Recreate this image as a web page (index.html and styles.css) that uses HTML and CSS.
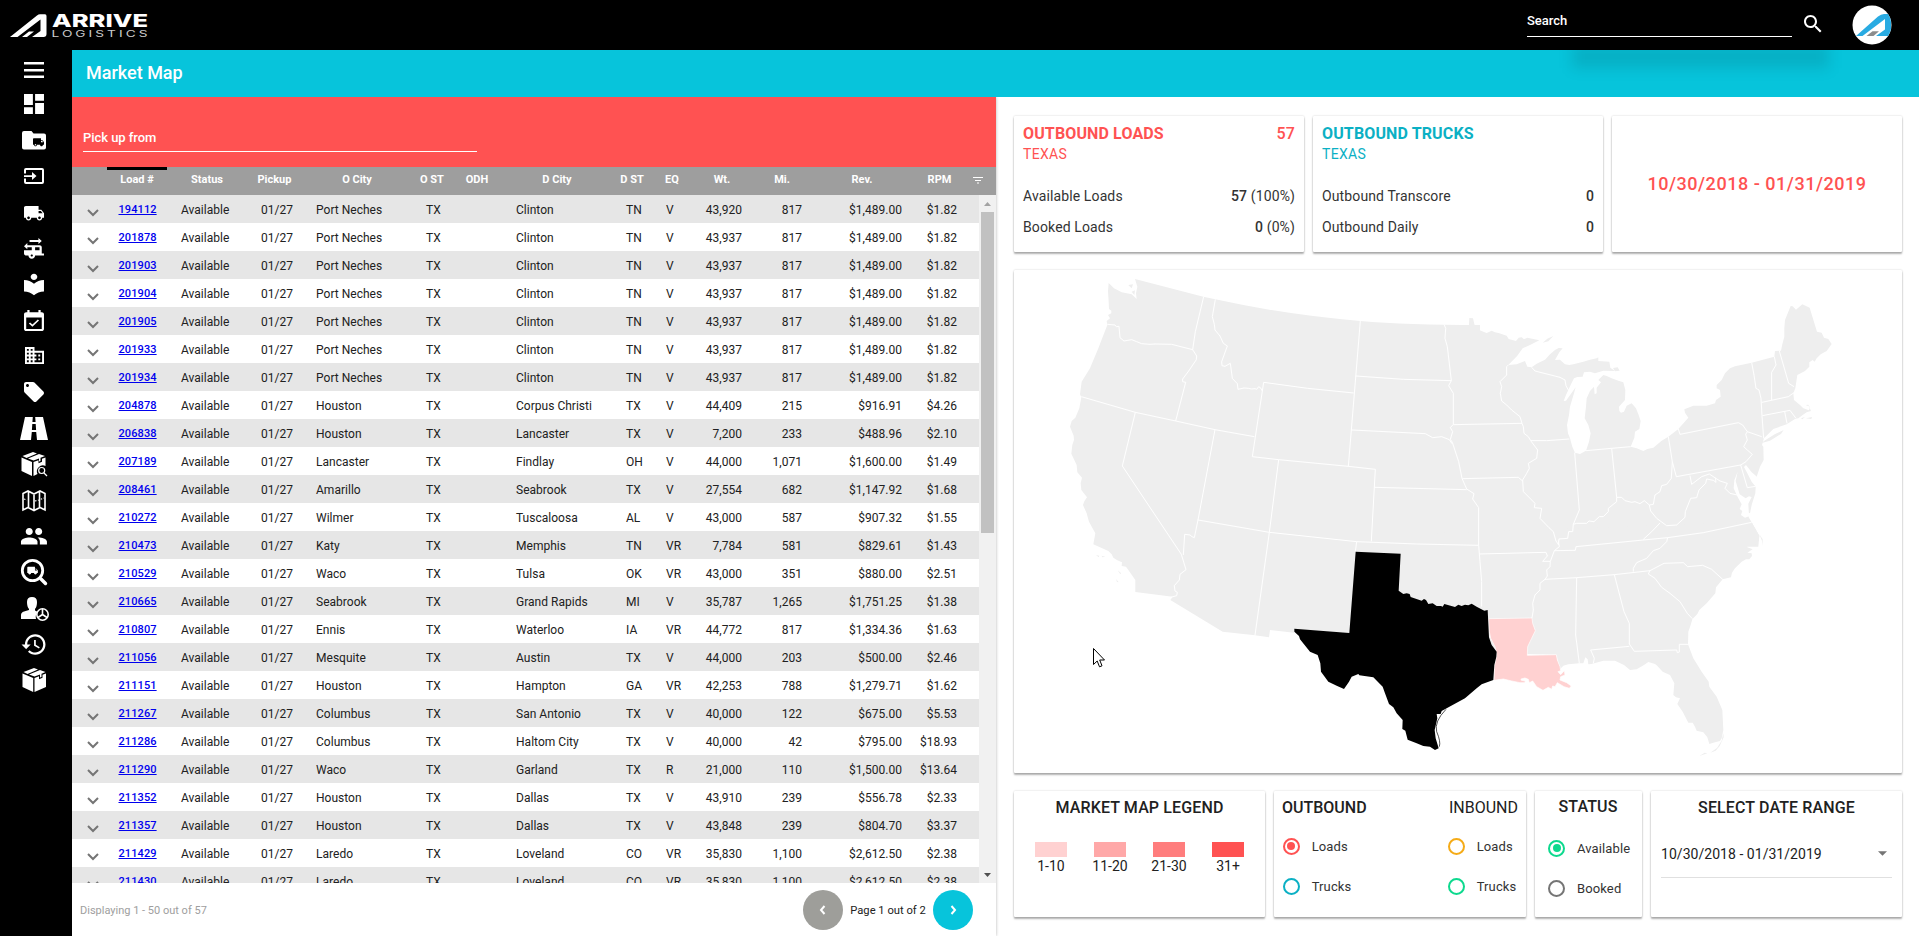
FILE: index.html
```html
<!DOCTYPE html>
<html lang="en">
<head>
<meta charset="utf-8">
<title>Market Map</title>
<link rel="stylesheet" href="styles.css">
</head>
<body>
<header class="topbar">
  <svg class="logo" width="150" height="50" viewBox="0 0 150 50">
    <path fill="#fff" fill-rule="evenodd" d="M10 37 37 15.500Q38.500 14.300 40 14.300H45Q46.500 14.300 46.500 16V34Q46.500 37 43.500 37H32L40.500 31V19.500L17.500 37ZM22 37 29 31.500H34L27 37Z"/>
    <text class="logo-name" x="52" y="27.300" textLength="96" lengthAdjust="spacingAndGlyphs">ARRIVE</text>
    <text class="logo-sub" x="51.500" y="36.800" textLength="99" lengthAdjust="spacingAndGlyphs">LOGISTICS</text>
  </svg>
  <div class="search">Search</div>
  <svg class="search-icon" width="24" height="24" viewBox="0 0 24 24"><path fill="#fff" d="M15.500 14h-.79l-.28-.27C15.410 12.590 16 11.110 16 9.500 16 5.910 13.090 3 9.500 3S3 5.910 3 9.500 5.910 16 9.500 16c1.610 0 3.090-.59 4.230-1.570l.27.28v.79l5 4.990L20.490 19l-4.990-5zm-6 0C7.010 14 5 11.990 5 9.500S7.010 5 9.500 5 14 7.010 14 9.500 11.990 14 9.500 14z"/></svg>
  <svg class="avatar" width="40" height="40" viewBox="0 0 40 40">
    <circle cx="20" cy="20" r="19.500" fill="#fff"/>
    <path fill="#29abe2" d="M4 31 26 11.500Q29 9 32 9H36Q38.800 13 39 17V24Q38 28 36 31H24L33 24.500V14L10.500 31Z"/>
    <path fill="#8c8c8c" d="M14.500 31 20.500 26.300H27L21.500 31Z"/>
  </svg>
</header>
<div class="shell">
  <nav class="sidebar">
    <svg viewBox="0 0 36 36"><path d="M8 10h20v2.500H8zM8 17h20v2.500H8zM8 23.500h20V26H8z"/></svg>
    <svg viewBox="0 0 36 36"><path transform="translate(4.670 2.670) scale(1.110)" d="M3 13h8V3H3v10zm0 8h8v-6H3v6zm10 0h8V11h-8v10zm0-18v6h8V3h-8z"/></svg>
    <svg viewBox="0 0 36 36"><path d="M8 7h7.500l2 2.500H28a2 2 0 0 1 2 2V23.500a2 2 0 0 1-2 2H8a2 2 0 0 1-2-2V9a2 2 0 0 1 2-2z"/><path class="ink" transform="translate(16.500 12.200) scale(.5)" d="M20 8h-3V4H3c-1.100 0-2 .9-2 2v11h2c0 1.660 1.340 3 3 3s3-1.340 3-3h6c0 1.660 1.340 3 3 3s3-1.340 3-3h2v-5l-3-4zM6 18.500c-.83 0-1.500-.67-1.500-1.500s.67-1.500 1.500-1.500 1.500.67 1.500 1.500-.67 1.500-1.500 1.500zm13.500-9l1.960 2.500H17V9.500h2.500z"/></svg>
    <svg viewBox="0 0 36 36"><path fill-rule="evenodd" d="M10 8h16a2 2 0 0 1 2 2v12a2 2 0 0 1-2 2H10a2 2 0 0 1-2-2v-3.500h2V22h16V10H10v3.500H8V10a2 2 0 0 1 2-2zM8 15.200h8V12l4.500 4-4.500 4v-3H8z"/></svg>
    <svg viewBox="0 0 36 36"><path transform="translate(7.100 6.400) scale(.91)" d="M20 8h-3V4H3c-1.100 0-2 .9-2 2v11h2c0 1.660 1.340 3 3 3s3-1.340 3-3h6c0 1.660 1.340 3 3 3s3-1.340 3-3h2v-5l-3-4zM6 18.500c-.83 0-1.500-.67-1.500-1.500s.67-1.500 1.500-1.500 1.500.67 1.500 1.500-.67 1.500-1.500 1.500zm13.500-9l1.960 2.500H17V9.500h2.500zm-1.500 9c-.83 0-1.500-.67-1.500-1.500s.67-1.500 1.500-1.500 1.500.67 1.500 1.500-.67 1.500-1.500 1.500z"/></svg>
    <svg viewBox="0 0 36 36"><path transform="translate(3.560 3.800) scale(1.110 1.040)" d="M20 17v-6c0-1.100-.9-2-2-2H7V7l-3 3 3 3v-2h4v3H4v3c0 1.100.9 2 2 2h2c0 1.660 1.340 3 3 3s3-1.340 3-3h8v-2h-2zm-9 3c-.55 0-1-.45-1-1s.45-1 1-1 1 .45 1 1-.45 1-1 1zm7-6h-4v-3h4v3zM17 2v2H9v2h8v2l3-3-3-3z"/></svg>
    <svg viewBox="0 0 36 36"><path transform="translate(4.670 3.600) scale(1.110 1.050)" d="M12 11.550C9.640 9.350 6.480 8 3 8v11c3.480 0 6.640 1.350 9 3.550 2.360-2.190 5.520-3.550 9-3.550V8c-3.480 0-6.640 1.350-9 3.550zM12 8c1.660 0 3-1.340 3-3s-1.340-3-3-3-3 1.340-3 3 1.340 3 3 3z"/></svg>
    <svg viewBox="0 0 36 36"><path transform="translate(4.670 5) scale(1.110 1.050)" d="M16.530 11.060L15.470 10l-4.880 4.880-2.120-2.120-1.060 1.060L10.590 17l5.940-5.940zM19 3h-1V1h-2v2H8V1H6v2H5c-1.110 0-1.990.9-1.990 2L3 19c0 1.100.89 2 2 2h14c1.100 0 2-.9 2-2V5c0-1.100-.9-2-2-2zm0 16H5V8h14v11z"/></svg>
    <svg viewBox="0 0 36 36"><path transform="translate(7.100 4.150) scale(.95)" d="M12 7V3H2v18h20V7H12zM6 19H4v-2h2v2zm0-4H4v-2h2v2zm0-4H4V9h2v2zm0-4H4V5h2v2zm4 12H8v-2h2v2zm0-4H8v-2h2v2zm0-4H8V9h2v2zm0-4H8V5h2v2zm10 12h-8v-2h2v-2h-2v-2h2v-2h-2V9h8v10zm-2-8h-2v2h2v-2zm0 4h-2v2h2v-2z"/></svg>
    <svg viewBox="0 0 36 36"><path transform="translate(6 4)" d="M21.410 11.580l-9-9C12.050 2.220 11.550 2 11 2H4c-1.100 0-2 .9-2 2v7c0 .55.22 1.050.59 1.420l9 9c.36.36.86.58 1.410.58.55 0 1.050-.22 1.410-.59l7-7c.37-.36.59-.86.59-1.410 0-.55-.23-1.060-.59-1.420zM5.500 7C4.670 7 4 6.330 4 5.500S4.670 4 5.500 4 7 4.670 7 5.500 6.330 7 5.500 7z"/></svg>
    <svg viewBox="0 0 36 36"><path d="M9 5h7.800l-.4 5h3.200l-.4-5H27l5 23H21l-.8-8h-4.400L15 28H4zM16.300 12l-.4 6h4.200l-.4-6z"/></svg>
    <svg viewBox="0 0 36 36"><path d="M5.500 9.500 16 14v14L5.500 23zM6.500 8 17 4l4 1.500-10.500 4.500zM23 6l6 2-4.500 1.800V13l-1.500.6v-3L17.500 12.600 12 10.500zM29.500 9.500V18a6 6 0 0 0-8 8l-4 2V14l5-1.800v3l3.500-1.400v-3z"/><circle class="line" cx="25.700" cy="22.500" r="3"/><path class="line" d="m28 25 3 3"/></svg>
    <svg viewBox="0 0 36 36"><path class="line thick" d="M7 9.500 12 7l6 3 6-3 5 2.500V26L24 23.500l-6 3-6-3L7 26zM12.500 7v16.500M18 10v16.500M23.500 7v16.500"/><path class="line" stroke-dasharray="1.500 1.500" d="m8 15 3 1M19 17l4-1 5-2"/></svg>
    <svg viewBox="0 0 36 36"><path transform="translate(3.800 2.100) scale(1.180)" d="M16 11c1.660 0 2.990-1.340 2.990-3S17.660 5 16 5c-1.660 0-3 1.340-3 3s1.340 3 3 3zm-8 0c1.660 0 2.990-1.340 2.990-3S9.660 5 8 5C6.340 5 5 6.340 5 8s1.340 3 3 3zm0 2c-2.330 0-7 1.170-7 3.500V19h14v-2.500c0-2.330-4.670-3.500-7-3.500zm8 0c-.29 0-.62.02-.97.05 1.160.84 1.970 1.970 1.970 3.450V19h6v-2.500c0-2.330-4.670-3.500-7-3.500z"/></svg>
    <svg viewBox="0 0 36 36"><circle class="line bold" cx="16.500" cy="14.500" r="10.200"/><path class="line heavy" d="m25 23 4.500 4.500"/><path transform="translate(10.800 8.800) scale(.48)" d="M20 8h-3V4H3c-1.100 0-2 .9-2 2v11h2c0 1.660 1.340 3 3 3s3-1.340 3-3h6c0 1.660 1.340 3 3 3s3-1.340 3-3h2v-5l-3-4zm-.5 1.500l1.960 2.500H17V9.500h2.500z"/></svg>
    <svg viewBox="0 0 36 36"><path d="M11 10q0-5 5-5t5 5q0 5-2 7v1.500l3 1.500a7 7 0 0 0-2 7H5v-4q0-2.500 3-3.500l5-1.500V17q-2-2-2-7z"/><circle class="line thick" cx="26.500" cy="22.500" r="5.700"/><path class="line thick" d="M26.500 17v5.500l-4.500 3M26.500 22.500l4.500 3"/></svg>
    <svg viewBox="0 0 36 36"><path transform="translate(4.400 2.900) scale(1.140)" d="M13 3c-4.970 0-9 4.030-9 9H1l3.890 3.890.07.14L9 12H6c0-3.870 3.130-7 7-7s7 3.130 7 7-3.130 7-7 7c-1.930 0-3.680-.79-4.940-2.060l-1.420 1.420C8.270 19.990 10.510 21 13 21c4.970 0 9-4.030 9-9s-4.030-9-9-9zm-1 5v5l4.280 2.540.72-1.210-3.500-2.080V8H12z"/></svg>
    <svg viewBox="0 0 36 36"><path d="M6.500 9.500 17.200 14v14L6.500 23zM7.500 8 18 4l4 1.500-10.500 4.500zM24 6l5.500 2-4 1.800V13l-1.500.6v-3L18.500 12.600 13 10.500zM30 9.500V23l-11.500 5V14l4.500-1.800v3l3.500-1.400v-3z"/></svg>
  </nav>
  <main class="main">
    <h1 class="titlebar">Market Map</h1>
    <div class="content">
      <section class="loads">
        <div class="filter"><div class="field">Pick up from</div></div>
        <div class="grid-row grid-head">
          <span></span><span class="sorted">Load #</span><span>Status</span><span>Pickup</span><span>O City</span><span>O ST</span><span>ODH</span><span>D City</span><span>D ST</span><span>EQ</span><span>Wt.</span><span>Mi.</span><span>Rev.</span><span>RPM</span>
          <svg class="filter-icon" width="10" height="7" viewBox="0 0 10 7"><path stroke="#fff" stroke-width="1" d="M0 .5h10M2 3.500h6M4 6h2"/></svg>
        </div>
        <div class="viewport">
          <div class="rows" id="rows"></div>
          <div class="scroll">
            <svg width="17" height="17" viewBox="0 0 17 17"><path fill="#a3a3a3" d="m5 11 3.500-4 3.500 4z"/></svg>
            <div class="thumb"></div>
            <svg width="17" height="17" viewBox="0 0 17 17"><path fill="#505050" d="m5 7 3.500 4L12 7z"/></svg>
          </div>
        </div>
        <footer class="pager">
          <span class="count">Displaying 1 - 50 out of 57</span>
          <span class="round prev"><svg width="8" height="10" viewBox="0 0 8 10"><path d="M5.500 1 2 5l3.500 4"/></svg></span>
          <span class="page">Page 1 out of 2</span>
          <span class="round next"><svg width="8" height="10" viewBox="0 0 8 10"><path d="M2.500 1 6 5 2.500 9"/></svg></span>
        </footer>
      </section>
      <section class="market">
        <div class="stats">
          <div class="card stat red">
            <div class="stat-title"><b>OUTBOUND LOADS</b><span>57</span></div>
            <div class="state">TEXAS</div>
            <div class="line-item first"><span>Available Loads</span><span><b>57</b> (100%)</span></div>
            <div class="line-item"><span>Booked Loads</span><span><b>0</b> (0%)</span></div>
          </div>
          <div class="card stat teal">
            <div class="stat-title"><b>OUTBOUND TRUCKS</b></div>
            <div class="state">TEXAS</div>
            <div class="line-item first"><span>Outbound Transcore</span><b>0</b></div>
            <div class="line-item"><span>Outbound Daily</span><b>0</b></div>
          </div>
          <div class="card range">10/30/2018 - 01/31/2019</div>
        </div>
        <div class="card map">
          <svg width="888" height="503" viewBox="1014 270 888 503">
            <g transform="translate(1040 265) scale(.33333)">
              <g class="land">
                <path d="M206 54 222 70 245 82 275 88 290 102 288 85 292 65 285 42 490 95 526 103Q740 150 961 168 1100 180 1320 180V1030L929 1104 763 1092 762 1103 690 1095 687 1117 645 1111 548 1100 391 1005 398 995 286 981V945L265 915 258 905 245 903 246 892 232 886 220 878 215 868 205 858 160 838 166 805 147 770 140 745 129 720 133 709 141 697 124 675 122 655 126 638 112 622 110 600 94 566 97 540 102 525 101 512 90 485 95 468 106 458 118 430 124 397 120 388 125 350 150 310 175 250 202 180 200 168 210 160 204 150 214 145 214 137 207 132 206 110 204 78Z"/>
                <path d="m265 60 14-2-4 12zM275 80l10-4-2 14zM168 870l10 2-2 5zM184 872l12 3-8 2zM233 916l10 8-2 4zM228 942l8 10-5-1z"/>
                <g transform="translate(1200 0)">
                  <path d="M-20 180H87L88 159 99 160 106 190 130 200 140 204 155 197 165 202 178 205 200 212 206 222 228 228 236 218 245 217 252 223 262 218 298 226 270 240 248 250 232 272 205 300 230 298 255 288 262 305 275 307 290 296 315 284 330 268 345 255 356 249 368 250 358 262 345 285 360 284 375 298 388 300 400 298 430 290 450 284 470 280 475 277 475 288 508 290 511 308 525 318 490 317 465 325 450 320 432 322 428 335 412 336 402 340 393 358 385 375 378 390 371 408 378 407 407 367 402 385 390 425 387 450 381 480 384 505 390 520 397 545 405 563 420 567 438 557 447 530 452 505 445 480 434 460 438 425 440 400 450 378 462 365 464 388 470 385 470 368 483 352 475 345 490 330 500 333 515 340 535 347 550 352 556 375 555 405 537 425 538 438 543 443 552 440 560 422 575 415 588 430 596 450 602 468 598 492 585 500 583 518 572 545 590 550 610 558 622 552 640 548 665 527 685 515 715 492 745 458 735 443 733 433 760 422 800 422 825 415 828 405 842 395 840 375 830 370 830 360 845 345 855 325 870 310 885 304 935 293 1003 275 1005 258 1023 257 1027 238 1033 215 1033 190 1035 165 1052 123 1058 124 1068 134 1087 118 1109 128 1131 200 1145 203 1152 218 1165 222 1175 237 1160 258 1142 268 1130 280 1124 290 1118 285 1108 292 1108 305 1095 318 1072 330 1066 370 1060 385 1062 405 1080 420 1090 430 1107 436 1110 425 1097 420 1105 419 1113 438 1100 442 1088 450 1075 460 1065 462 1040 478 1000 492 972 520 966 540 970 545 971 585 960 605 950 635 945 630 935 622 918 600 912 606 922 625 935 650 947 665 946 685 935 720 930 745 920 740 927 758 935 772 958 812 955 845H-20Z"/>
                  <path d="m308 233 14-12 18-8-15 16zM519 309l14-2 6 10-14 2zM972 528l32-20 27-13-8 12-33 20-25 7zM1083 460l12-4-8 7zM1098 460l18-4-2 6zM958 808l10 15v20l-2-16z"/>
                  <path class="water" d="m893 620-6 28 12 40 18 12 10-6 8 2-10 20 2 38-12 4-12-8 4-12-8-6 6-14-12-22-12-26 2-24z"/>
                </g>
                <g transform="translate(1200 705)">
                  <path d="M-20 100 935 67 958 107 955 122 945 138 920 136 922 142 938 148 922 158 935 160 936 168 928 178 918 178 905 185 885 205 876 218 873 232 848 238 828 262 826 280 800 310 778 330 772 342 757 358 752 375 745 395 744 433 760 475 785 515 806 545 808 560 830 590 847 630 850 690 845 715 840 723 825 727 808 732 802 712 790 697 770 692 765 680 758 668 745 668 728 635 712 612 720 595 708 592 700 585 703 550 690 525 668 515 650 496 645 492 625 486 612 495 590 508 570 510 552 495 525 482 490 482 455 492 445 493 443 478 436 472 430 490 418 490 385 493 370 497 360 508 349 464 160 460-20 440Z"/>
                  <path d="m850 700 1 12-12 26-12 14-16 6 20-14 14-22zM778 768l16-10 8 2z"/>
                </g>
              </g>
              <g class="borders">
                <path d="M202 178 225 180 229 185 237 184 240 218 252 228 275 224 290 230 305 236 330 238 345 237 395 238 458 254M491 95 466 200 458 254 470 273 469 284 446 318 428 342 428 350 437 352 407 468M526 103 517 155 523 178 525 195 540 213 550 235 562 243 545 290 546 302 555 304 571 295 577 340 592 356 594 373 612 369 625 370 635 372 645 371 650 373 656 365 663 370 667 378M124 395 286 442 407 468 525 494 643 515M671 352 637 575 716 584 925 604 1006 613 994 829M671 352Q800 372 941 384M961 168 925 604M286 442 247 603 424 868 438 914 420 928 418 945 403 962 405 978 412 982 410 992 392 997M525 494 474 765 463 818 456 815 450 810 434 808 430 870M474 765 688 802 950 830 1130 837 1316 841M716 584 688 802 645 1111M950 830 946 860M947 333Q1090 346 1234 347M936 495 1156 506 1178 518 1205 515 1228 524 1236 536M1004 667 1280 674M1213 180 1217 190 1215 220 1222 245 1234 347 1226 362 1240 385V478L1231 488 1238 500 1231 523 1237 532 1256 590 1266 640 1280 672 1302 686 1298 702 1316 728V841L1320 890 1325 950V1025"/>
                <path transform="translate(1200 0)" d="M40 479 246 475M205 300 200 305V330L180 350 185 365 181 385 185 408 200 420 215 435 240 455 246 475 250 485 252 505 265 515 272 527 293 555 290 580 265 595 268 610 260 625 248 645 250 680 285 715 283 728 305 730 300 760 327 788 340 800 348 828 355 838M67 641 235 637 248 648M272 527 320 527 388 522M275 307 285 318 360 337 375 345 378 362 385 375M404 563 418 735 400 778 398 800 386 800 383 820 357 822 355 840M438 557 515 550 572 545M515 550 530 697M400 778 410 775 440 775 447 768 462 770 478 755 490 755 505 740 505 730 530 710 530 697 545 697 555 707 575 712 585 710 600 716 613 707 628 720 640 718 645 690 660 680 665 662 680 658 694 640 697 590M685 515 697 590 709 635 902 600 918 590 937 568 923 556 911 545 922 525 917 508 922 500 908 480 895 473 720 508 715 492M922 500 965 515M935 293 942 330 948 370 957 375 963 400 966 452 971 520M1003 275 1008 300 995 322 995 405M1018 258 1046 355 1062 365M966 412 1045 395 1062 383M967 452 1050 436 1068 460M1034 440 1041 475M750 632 755 658 785 635 808 627 826 639 840 648 862 655 855 670 870 685 900 692M628 720 632 738 650 760 680 782 710 780 735 757 736 740 752 700 770 698 777 675 797 655 800 642 820 646 828 652 826 638M660 774 635 800 610 823M902 600 922 668 947 664"/>
                <path transform="translate(1200 705)" d="M343 152 406 151 408 140 610 120 683 113 790 98 935 67M118 162 318 157 322 168 308 184 331 184M355 122 358 140 343 152 331 184 330 200 320 210 322 228 315 238 300 250 300 270 285 285 278 310 280 330 276 354M315 238 410 233 523 224 630 212M683 113 680 125 660 145 640 152 620 175 590 188 580 205V215M410 233 407 405 418 490M523 224 552 335 568 370 568 432 583 454 710 450 712 458 718 456V433H744M568 439 452 450 463 475 460 490M630 212 672 190 730 188 743 200 788 196 815 208 848 238M630 212 625 222 645 235 665 262 690 280 720 305 742 340 757 356"/>
              </g>
              <path class="hit" transform="translate(1200 705)" d="M146 356 276 354 278 370 286 392 275 415 263 440 262 466 349 464 352 480 360 500 362 512 354 515 362 524 373 512 375 525 362 530 360 540 380 548 394 558 388 565 372 560 352 548 345 560 338 558 335 568 325 562 309 571 290 560 278 543 268 548 265 538 255 534 243 537 244 541 256 543 254 548 240 548 215 543 190 537 162 541 163 500 170 465 165 440 152 415 148 395Z"/>
              <g transform="translate(600 795)">
                <path d="M347 65 482 71 476 182 490 192 500 190 509 192 512 201 545 212 552 207 558 210 565 222 578 220 590 228 603 228 608 230 613 222 645 231 655 224 665 228 675 224 685 226 695 221 710 230 733 242 743 240 747 322 755 345 770 365 769 380 763 405 760 450 725 463 710 475 675 505 620 535 605 543 602 552 590 552 592 565 584 600 587 625 596 655 585 660 570 650 550 648 530 640 503 629 496 602 487 597 488 570 470 550 460 532 447 522 435 490 428 470 400 442 358 436 355 432 335 440 327 455 312 477 290 467 265 455 243 425 241 400 233 375 210 365 180 328 177 318 163 305V296L328 309Z"/>
                <path class="reef" d="M618 538Q582 575 590 605 603 635 598 650"/>
              </g>
            </g>
            <path class="cursor" d="M1093.500 648.500V664.500L1097.200 661 1099.500 666.800 1102 665.800 1099.700 660H1104.500Z"/>
          </svg>
        </div>
        <div class="controls">
          <div class="card legend">
            <h2>MARKET MAP LEGEND</h2>
            <ul class="swatches">
              <li><i class="s1"></i>1-10</li><li><i class="s2"></i>11-20</li><li><i class="s3"></i>21-30</li><li><i class="s4"></i>31+</li>
            </ul>
          </div>
          <div class="card bounds">
            <div class="outbound"><h2>OUTBOUND</h2><label><i class="radio c-red on"></i>Loads</label><label><i class="radio c-teal"></i>Trucks</label></div>
            <div class="inbound"><h2 class="light">INBOUND</h2><label><i class="radio c-amber"></i>Loads</label><label><i class="radio c-green"></i>Trucks</label></div>
          </div>
          <div class="card status">
            <h2>STATUS</h2>
            <label><i class="radio c-green on"></i>Available</label><label><i class="radio c-gray"></i>Booked</label>
          </div>
          <div class="card dates">
            <h2>SELECT DATE RANGE</h2>
            <div class="select"><span>10/30/2018 - 01/31/2019</span><svg width="9" height="5" viewBox="0 0 10 5"><path fill="#757575" d="M0 0h10L5 5z"/></svg></div>
          </div>
        </div>
      </section>
    </div>
  </main>
</div>
<script src="app.js"></script>
</body>
</html>
```
FILE: styles.css
```css
* { box-sizing: border-box; }
body { margin: 0; height: 936px; overflow: hidden; background: #fff; color: #212121; font-family: Roboto, "Liberation Sans", sans-serif; }
h1, h2, ul { margin: 0; padding: 0; }

.topbar { height: 50px; background: #000; display: flex; align-items: flex-start; }
.logo-name { font: 800 18px Inter, sans-serif; fill: #fff; }
.logo-sub { font: 400 9px Inter, sans-serif; letter-spacing: 2px; fill: #ccc; }
.search { width: 265px; height: 37px; margin-left: 1377px; border-bottom: 1px solid #fff; color: #fff; font-size: 13px; font-weight: 500; line-height: 41px; }
.search-icon { margin: 12px 0 0 9px; flex: none; }
.avatar { margin: 5px 0 0 27px; flex: none; }

.shell { display: flex; height: 886px; }
.sidebar { width: 72px; flex: none; background: #000; padding: 2px 0 0 16px; display: flex; flex-direction: column; }
.sidebar svg { width: 36px; height: 36px; flex: none; fill: #fff; }
.sidebar .ink { fill: #000; }
.sidebar .line { fill: none; stroke: #fff; stroke-width: 1.2; }
.sidebar .thick { stroke-width: 1.6; }
.sidebar .bold { stroke-width: 2.8; }
.sidebar .heavy { stroke-width: 3.4; stroke-linecap: round; }

.main { flex: 1; display: flex; flex-direction: column; }
.titlebar { position: relative; overflow: hidden; height: 47px; background: #07c4db; color: #fff; font-size: 18px; font-weight: 500; line-height: 46px; padding-left: 14px; }
.titlebar::after { content: ""; position: absolute; right: 90px; top: -5px; width: 257px; height: 23px; background: rgba(0, 0, 0, .1); filter: blur(7px); }
.content { flex: 1; display: flex; min-height: 0; }

.loads { width: 924px; flex: none; display: flex; flex-direction: column; box-shadow: 0 0 3px rgba(0, 0, 0, .3); }
.filter { height: 70px; background: #ff5252; padding: 28px 0 0 11px; }
.field { width: 394px; height: 27px; border-bottom: 1px solid #fff; color: #fff; font-size: 13px; font-weight: 500; line-height: 25px; letter-spacing: -.05px; }
.grid-row { display: grid; height: 28px; grid-template-columns: 35px 60px 80px 55px 110px 40px 50px 110px 40px 40px 60px 60px 100px 55px 1fr; font-size: 12px; line-height: 28px; white-space: nowrap; }
.grid-head { background: #9e9e9e; color: #fff; font-size: 11px; font-weight: 700; line-height: 25px; text-align: center; flex: none; }
.sorted { border-top: 3px solid #000; line-height: 19px; }
.filter-icon { margin: 10px 0 0 6px; }
.viewport { flex: 1; display: flex; min-height: 0; }
.rows { flex: 1; overflow: hidden; }
.rows .grid-row > span { padding: 1px 0 0 14px; letter-spacing: .02px; }
.rows .grid-row > .num { padding: 1px 10px 0 0; text-align: right; }
.rows .grid-row:nth-child(odd) { background: #e6e6e6; }
.rows a { color: #0000ee; font-weight: 500; font-size: 11px; letter-spacing: .1px; text-decoration: underline; }
.rows .grid-row > .id { padding: 0 0 0 11.500px; }
.chevron { margin: 14px 0 0 15px; }
.scroll { width: 17px; background: #f1f1f1; display: flex; flex-direction: column; }
.scroll svg:last-child { margin-top: auto; }
.thumb { height: 321px; margin: 0 2px; background: #c1c1c1; }
.pager { height: 53px; flex: none; display: flex; align-items: center; padding: 1px 23px 0 8px; font-size: 12px; }
.count { color: #9e9e9e; font-size: 11px; margin-right: auto; }
.round { width: 40px; height: 40px; border-radius: 50%; display: flex; align-items: center; justify-content: center; }
.round path { fill: none; stroke: #fff; stroke-width: 2; }
.prev { background: #9e9e9a; }
.next { background: #07c4db; }
.page { width: 90px; text-align: center; font-size: 11.200px; }

.market { flex: 1; padding: 19px 17px 0 18px; display: flex; flex-direction: column; gap: 18px; }
.card { background: #fff; border-radius: 1px; box-shadow: 0 2px 2px rgba(0, 0, 0, .3), 0 0 2px rgba(0, 0, 0, .2); }
.stats { display: grid; grid-template-columns: repeat(3, 1fr); gap: 9px; height: 136px; }
.stat { padding: 7px 9px 0; }
.stat-title { display: flex; justify-content: space-between; font-size: 16px; line-height: 22px; letter-spacing: .13px; }
.stat-title span { font-weight: 500; }
.state { font-size: 14px; line-height: 18px; letter-spacing: .3px; }
.red .stat-title, .red .state { color: #ff5252; }
.teal .stat-title, .teal .state { color: #0bb0c4; }
.line-item { display: flex; justify-content: space-between; font-size: 14px; line-height: 31px; letter-spacing: .12px; color: #333; }
.line-item b { font-weight: 500; }
.first { margin-top: 18px; }
.range { display: flex; align-items: center; justify-content: center; color: #ff5252; font-size: 18px; font-weight: 500; letter-spacing: .53px; padding-bottom: 1px; }

.map { height: 503px; }
.map svg { display: block; }
.land { fill: #eee; }
.land .water { fill: #fff; }
.borders { fill: none; stroke: #fff; stroke-width: 3; stroke-linejoin: round; }
.hit { fill: #ffd1d1; stroke: #fff; stroke-width: 2; }
.reef { fill: none; stroke: #000; stroke-width: 2; }
.cursor { fill: #fff; stroke: #000; stroke-width: 1; }

.controls { display: grid; grid-template-columns: 251px 252px 107px 251px; gap: 9px; height: 126px; }
h2 { font-size: 16px; font-weight: 500; line-height: 20px; letter-spacing: .13px; }
.legend { padding: 7px 21px 0; text-align: center; }
.swatches { display: flex; justify-content: space-between; list-style: none; margin-top: 24px; }
.swatches li { width: 32px; font-size: 14px; line-height: 18px; white-space: nowrap; display: flex; flex-direction: column; align-items: center; }
.swatches i { width: 32px; height: 15px; flex: none; }
.s1 { background: #ffd1d1; }
.s2 { background: #ffa8a8; }
.s3 { background: #ff7d7d; }
.s4 { background: #ff5252; }
.bounds { display: flex; justify-content: space-between; padding: 7px 8px 0; }
.bounds h2 { letter-spacing: 0; }
.light { font-weight: 400; }
label { display: flex; align-items: center; height: 20px; margin-top: 20px; font-size: 13px; letter-spacing: .12px; color: #333; }
h2 + label { margin-top: 18px; }
.radio { width: 17px; height: 17px; border: 2px solid; border-radius: 50%; margin-right: 12px; padding: 2.500px; }
.outbound label { margin-left: .7px; }
.inbound label { margin-left: -1.300px; }
.on::before { content: ""; display: block; width: 8px; height: 8px; border-radius: 50%; background: currentColor; }
.c-red { color: #ff5252; }
.c-teal { color: #0bb0c4; }
.c-amber { color: #f5ab17; }
.c-green { color: #0dd98e; }
.c-gray { color: #757575; }
.status { padding: 6px 0 0 13px; }
.status h2 { text-align: center; margin-right: 14px; }
.status h2 + label { margin-top: 21px; }
.dates { padding: 7px 10px 0; text-align: center; }
.select { display: flex; justify-content: space-between; align-items: center; height: 43px; margin-top: 17px; padding-right: 5px; padding-bottom: 5px; border-bottom: 1px solid #e0e0e0; font-size: 14px; letter-spacing: .04px; }
```
FILE: app.js
```js
const loads = `194112|Port Neches|Clinton|TN|V|43,920|817|1,489.00|1.82
201878|Port Neches|Clinton|TN|V|43,937|817|1,489.00|1.82
201903|Port Neches|Clinton|TN|V|43,937|817|1,489.00|1.82
201904|Port Neches|Clinton|TN|V|43,937|817|1,489.00|1.82
201905|Port Neches|Clinton|TN|V|43,937|817|1,489.00|1.82
201933|Port Neches|Clinton|TN|V|43,937|817|1,489.00|1.82
201934|Port Neches|Clinton|TN|V|43,937|817|1,489.00|1.82
204878|Houston|Corpus Christi|TX|V|44,409|215|916.91|4.26
206838|Houston|Lancaster|TX|V|7,200|233|488.96|2.10
207189|Lancaster|Findlay|OH|V|44,000|1,071|1,600.00|1.49
208461|Amarillo|Seabrook|TX|V|27,554|682|1,147.92|1.68
210272|Wilmer|Tuscaloosa|AL|V|43,000|587|907.32|1.55
210473|Katy|Memphis|TN|VR|7,784|581|829.61|1.43
210529|Waco|Tulsa|OK|VR|43,000|351|880.00|2.51
210665|Seabrook|Grand Rapids|MI|V|35,787|1,265|1,751.25|1.38
210807|Ennis|Waterloo|IA|VR|44,772|817|1,334.36|1.63
211056|Mesquite|Austin|TX|V|44,000|203|500.00|2.46
211151|Houston|Hampton|GA|VR|42,253|788|1,279.71|1.62
211267|Columbus|San Antonio|TX|V|40,000|122|675.00|5.53
211286|Columbus|Haltom City|TX|V|40,000|42|795.00|18.93
211290|Waco|Garland|TX|R|21,000|110|1,500.00|13.64
211352|Houston|Dallas|TX|V|43,910|239|556.78|2.33
211357|Houston|Dallas|TX|V|43,848|239|804.70|3.37
211429|Laredo|Loveland|CO|VR|35,830|1,100|2,612.50|2.38
211430|Laredo|Loveland|CO|VR|35,830|1,100|2,612.50|2.38`.split("\n");

const chevron = '<svg class="chevron" width="12" height="8" viewBox="0 0 12 8"><path fill="none" stroke="#757575" stroke-width="2" d="M1 1l5 5 5-5"/></svg>';

document.getElementById("rows").innerHTML = loads.map(line => {
  const [id, from, to, st, eq, wt, mi, rev, rpm] = line.split("|");
  return `<div class="grid-row">${chevron}<span class="id"><a>${id}</a></span><span>Available</span><span>01/27</span><span>${from}</span><span>TX</span><span></span><span>${to}</span><span>${st}</span><span>${eq}</span><span class="num">${wt}</span><span class="num">${mi}</span><span class="num">$${rev}</span><span class="num">$${rpm}</span></div>`;
}).join("");
```
